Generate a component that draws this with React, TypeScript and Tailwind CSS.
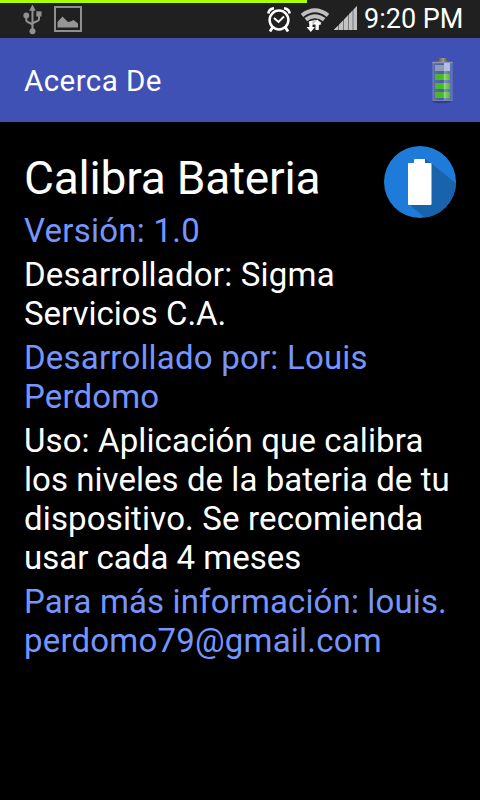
import React from "react";

function UsbIcon() {
  return (
    <svg className="ml-[23px] mt-[5px] block h-[30px] w-5 shrink-0" viewBox="0 0 20 30" fill="none" stroke="#909090" strokeWidth="2">
      <path d="M9.500 4v22M3.300 11v4.300c0 2.500 6.200 2.500 6.200 5.200M16 9v5.300c0 2.500-6.500 2.500-6.500 5" />
      <path d="M9.500-0.500l3.300 6.300H6.200z" fill="#909090" stroke="none" />
      <circle cx="3.300" cy="10.500" r="2.900" fill="#909090" stroke="none" />
      <rect x="13.300" y="6.300" width="5.200" height="5.200" fill="#909090" stroke="none" />
      <circle cx="9.500" cy="26.300" r="3" fill="#909090" stroke="none" />
    </svg>
  );
}

function PictureIcon() {
  return (
    <svg className="ml-[11px] mt-1.5 block h-[26px] w-[28px] shrink-0" viewBox="0 0 28 26">
      <rect x="1" y="1" width="26" height="24" fill="none" stroke="#8e8e8e" strokeWidth="2" />
      <path d="M3.500 21.500v-5.500l5-5.500 5.500 5.500 2.500-.5 3-1.500 4.500 3.500v4z" fill="#969696" />
    </svg>
  );
}

function AlarmIcon() {
  return (
    <svg className="mt-[7px] block h-[25px] w-[24px] shrink-0" viewBox="0 0 24 25" fill="none" stroke="#fff">
      <circle cx="12" cy="13" r="9.400" strokeWidth="2.500" />
      <path d="M1.300 6.500Q2 2 7 1.200M22.700 6.500Q22 2 17 1.200" strokeWidth="2.600" />
      <path d="M7 11l4.500 4L17 9.500" strokeWidth="2" />
      <path d="M5.500 20.500l-2.500 4M18.500 20.500l2.500 4" strokeWidth="2.800" />
    </svg>
  );
}

function WifiIcon() {
  return (
    <svg className="ml-[9px] mt-2 block h-6 w-[30px] shrink-0" viewBox="0 0 30 24">
      <g fill="none" stroke="#bfbfbf" strokeWidth="4">
        <path d="M2 7.300Q15-2.800 28 7.300" />
        <path d="M5.800 11.600Q15 4.800 24.200 11.600" />
        <path d="M9.600 16Q15 11.700 20.400 16" />
      </g>
      <path d="M9.300 13h3.200v6H15l-4.200 5-4.300-5h2.800zM15.500 22v-5.500H13l4.200-5 4.300 5h-2.700V22z" fill="#fff" />
    </svg>
  );
}

function SignalIcon() {
  return (
    <svg className="ml-[4px] mt-1.500 block h-6 w-6 shrink-0 translate-y-[6px]" viewBox="0 0 24 24" fill="#c2c2c2">
      <path d="M0 24L23 0v24z" fill="#777" />
      <path d="M0 24v-.500L4 19.700V24zM5 24v-5.300L9 14.500V24zM10 24V13.500l4-4.200V24zM15 24V8.300L18.500 4.600V24zM19.500 24V3.600L23 0v24z" />
    </svg>
  );
}

function ChargeIcon() {
  return (
    <svg className="mr-[26px] mt-[19px] block h-12 w-6" viewBox="0 0 24 48">
      <defs>
        <linearGradient id="cap">
          <stop offset="0" stopColor="#555" />
          <stop offset="0.600" stopColor="#999" />
          <stop offset="1" stopColor="#555" />
        </linearGradient>
        <linearGradient id="cell">
          <stop offset="0" stopColor="#46b82a" />
          <stop offset="0.550" stopColor="#49b82d" />
          <stop offset="0.620" stopColor="#8fd873" />
          <stop offset="1" stopColor="#50b832" />
        </linearGradient>
        <linearGradient id="glass">
          <stop offset="0" stopColor="#5f6da4" />
          <stop offset="0.540" stopColor="#495aa6" />
          <stop offset="0.600" stopColor="#7f8dc9" />
          <stop offset="1" stopColor="#5363ac" />
        </linearGradient>
      </defs>
      <ellipse cx="12" cy="44.500" rx="9.500" ry="1.800" fill="#26367d" opacity="0.650" />
      <rect x="8" y="1" width="9" height="5" rx="1" fill="url(#cap)" />
      <rect x="3" y="5.500" width="19" height="38" fill="url(#glass)" stroke="#7581ad" />
      <path d="M2.500 5.500h20" stroke="#8994b5" strokeWidth="1.500" />
      <rect x="5" y="8" width="15" height="6" fill="#8c9bbd" />
      <rect x="14" y="6" width="6" height="8" fill="#b3bedd" />
      <rect x="5" y="17" width="15" height="6" fill="url(#cell)" />
      <rect x="5" y="26" width="15" height="6" fill="url(#cell)" />
      <rect x="5" y="35" width="15" height="6" fill="url(#cell)" />
    </svg>
  );
}

function AppLogo() {
  return (
    <svg className="mt-6 block h-[72px] w-[72px] shrink-0" viewBox="0 0 72 72">
      <defs>
        <clipPath id="disc">
          <circle cx="36" cy="36" r="36" />
        </clipPath>
      </defs>
      <circle cx="36" cy="36" r="36" fill="#1e7bd9" />
      <path clipPath="url(#disc)" d="M41 13l6 4L80 44v36H50L25 58z" fill="#1963ad" />
      <path d="M31 13h9.500q.5 0 .5.500V17h5.500q1 0 1 1v40q0 1-1 1h-21.500q-1 0-1-1V18q0-1 1-1H30v-3q0-1 1-1z" fill="#fff" />
    </svg>
  );
}

interface Line {
  text: string;
  tracking?: string;
}

interface EntryProps {
  lines: Line[];
  accent?: boolean;
}

function Entry({ lines, accent }: EntryProps) {
  return (
    <p className={accent ? "text-[#7595ff]" : "text-white"}>
      {lines.map((line) => (
        <span key={line.text} className={`block ${line.tracking ?? ""}`}>{line.text}</span>
      ))}
    </p>
  );
}

export default function App() {
  return (
    <main className="h-[800px] w-[480px] overflow-hidden bg-black font-['Roboto',sans-serif] text-white">
      <div className="relative flex h-[38px] items-start bg-[#202020]">
        <div className="absolute left-0 top-0 h-[3px] w-[307px] bg-[#aeff00]" />
        <UsbIcon />
        <PictureIcon />
        <div className="ml-auto flex items-start">
          <AlarmIcon />
          <WifiIcon />
          <SignalIcon />
          <span className="ml-[6px] mt-[3px] w-[116px] whitespace-nowrap text-[27px] leading-8">9:20 PM</span>
        </div>
      </div>
      <header className="flex h-[84px] items-start justify-between bg-[#3f51b5]">
        <h1 className="ml-6 mt-[26px] whitespace-nowrap text-[29.500px] leading-[35px] tracking-[0.45px]">Acerca De</h1>
        <ChargeIcon />
      </header>
      <div className="flex h-[89px] items-start justify-between pl-6 pr-6">
        <h2 className="mt-[29px] whitespace-nowrap text-[46px] leading-[54px] tracking-[-0.2px]">Calibra Bateria</h2>
        <AppLogo />
      </div>
      <section className="flex flex-col gap-[5px] whitespace-nowrap pl-6 text-[33px] leading-[39px]">
        <Entry accent lines={[{ text: "Versión: 1.0", tracking: "tracking-[0.25px]" }]} />
        <Entry
          lines={[{ text: "Desarrollador: Sigma", tracking: "tracking-[0.2px]" }, { text: "Servicios C.A." }]}
        />
        <Entry
          accent
          lines={[
            { text: "Desarrollado por: Louis", tracking: "tracking-[0.2px]" },
            { text: "Perdomo", tracking: "tracking-[0.15px]" },
          ]}
        />
        <Entry
          lines={[
            { text: "Uso: Aplicación que calibra", tracking: "tracking-[0.12px]" },
            { text: "los niveles de la bateria de tu", tracking: "tracking-[0.05px]" },
            { text: "dispositivo. Se recomienda", tracking: "tracking-[0.15px]" },
            { text: "usar cada 4 meses" },
          ]}
        />
        <Entry
          accent
          lines={[
            { text: "Para más información: louis.", tracking: "tracking-[0.13px]" },
            { text: "perdomo79@gmail.com", tracking: "tracking-[0.2px]" },
          ]}
        />
      </section>
    </main>
  );
}
